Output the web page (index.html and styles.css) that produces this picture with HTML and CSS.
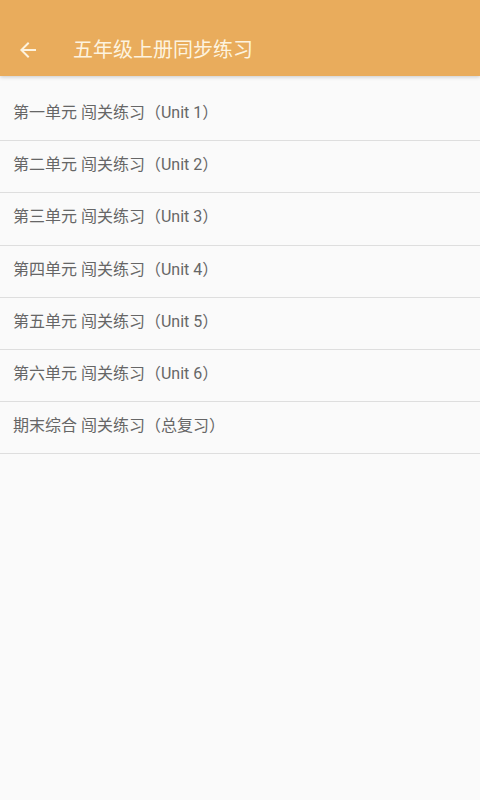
FILE: index.html
```html
<!DOCTYPE html>
<html>
  <head>
    <meta charset="utf-8">
    <title>五年级上册同步练习</title>
    <link rel="stylesheet" href="styles.css">
  </head>
  <body>
    <div id="toolbar">
      <button id="back">
        <svg width="24" height="24" viewBox="0 0 24 24">
          <path d="M20 11H7.83l5.59-5.59L12 4l-8 8 8 8 1.41-1.41L7.83 13H20v-2z" fill="#fdf3df"/>
        </svg>
      </button>
      <h1>五年级上册同步练习</h1>
    </div>

    <div id="list">
      <div class="item">第一单元 闯关练习（Unit 1）</div>
      <div class="item">第二单元 闯关练习（Unit 2）</div>
      <div class="item">第三单元 闯关练习（Unit 3）</div>
      <div class="item">第四单元 闯关练习（Unit 4）</div>
      <div class="item">第五单元 闯关练习（Unit 5）</div>
      <div class="item">第六单元 闯关练习（Unit 6）</div>
      <div class="item">期末综合 闯关练习（总复习）</div>
    </div>
  </body>
</html>
```

FILE: styles.css
```css
body {
  margin: 0;
  height: 800px;
  background: #fafafa;
  font-family: Roboto, "Noto Sans CJK SC", sans-serif;
}

#toolbar {
  display: flex;
  align-items: center;
  height: 76px;
  box-sizing: border-box;
  background: #e9ac5c;
  box-shadow: 0 1px 4px rgba(0, 0, 0, 0.2);
  position: relative;
}

#back {
  display: flex;
  align-items: center;
  justify-content: center;
  width: 24px;
  height: 24px;
  margin: 24px 0 0 16px;
  padding: 0;
  border: none;
  background: transparent;
}

#toolbar > h1 {
  margin: 24px 0 0 33px;
  font-size: 20px;
  font-weight: normal;
  color: #fdf3df;
  line-height: 1;
}

#list {
  padding-top: 13px;
}

.item {
  height: 52.2px;
  padding: 13px 0 0 13px;
  box-sizing: border-box;
  border-bottom: 1px solid #dedede;
  font-size: 16px;
  line-height: 22px;
  color: #666;
}
```
